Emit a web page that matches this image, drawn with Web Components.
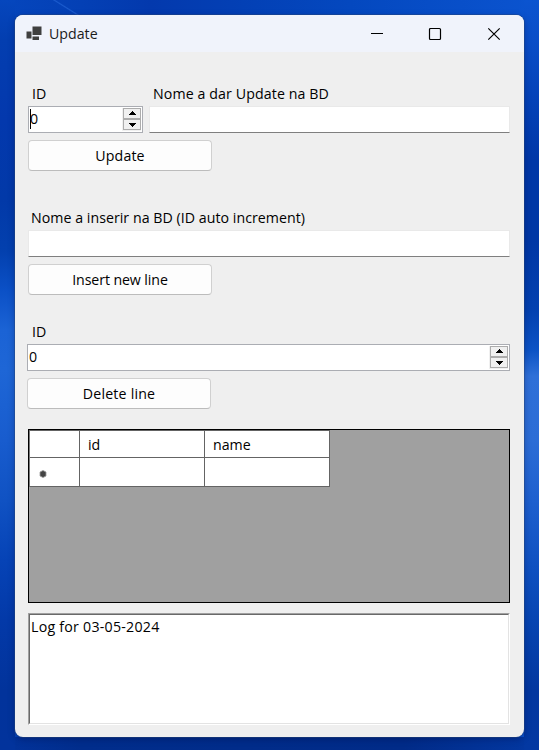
<!DOCTYPE html>
<html lang="pt">
<head>
<meta charset="utf-8">
<title>Update</title>
<style>
html,body{margin:0;height:100%;overflow:hidden}
body{font:14.2px/20px "Open Sans","Noto Sans",sans-serif;color:#000}
</style>
</head>
<body>
<desk-top>
  <app-window caption="Update">
    <form-row style="margin-top:32px">
      <form-field style="width:115px"><field-label slot="label" style="padding-left:4px">ID</field-label><spin-box value="0" caret></spin-box></form-field>
      <form-field style="flex:1"><field-label slot="label" style="padding-left:4px" fit="175">Nome a dar Update na BD</field-label><text-box></text-box></form-field>
    </form-row>
    <push-button style="margin-top:7px" fit="48.500">Update</push-button>
    <form-field style="margin-top:37px"><field-label slot="label" style="padding-left:3px" fit="273">Nome a inserir na BD (ID auto increment)</field-label><text-box></text-box></form-field>
    <push-button style="margin-top:7px" fit="94.500">Insert new line</push-button>
    <form-field style="margin:27px 0 0 -1px"><field-label slot="label" style="padding-left:5px">ID</field-label><spin-box value="0"></spin-box></form-field>
    <push-button style="margin:7px 0 0 -1px" fit="71.500">Delete line</push-button>
    <data-grid></data-grid>
    <log-box fit="127.500">Log for 03-05-2024</log-box>
  </app-window>
</desk-top>
<script>
const define = (name, html, setup) => customElements.define(name, class extends HTMLElement {
  connectedCallback() {
    if (this.shadowRoot) return;
    this.attachShadow({ mode: 'open' }).innerHTML = html;
    if (setup) setup(this, this.shadowRoot);
  }
});
// Tracks a text out or in so that it takes the width given in its fit attribute.
const fitText = (el, root) => {
  const want = parseFloat(el.getAttribute('fit'));
  const t = root.querySelector('.t');
  if (!want || !t) return;
  const n = el.textContent.trim().length;
  t.style.letterSpacing = ((want + 1 - t.getBoundingClientRect().width) / n) + 'px';
};

define('desk-top', `<style>
:host{display:block;box-sizing:border-box;width:539px;height:750px;padding:15px;overflow:hidden;
background:
linear-gradient(32deg,transparent 46%,rgba(60,130,240,.4) 50%,transparent 54%) 52px 0/28px 15px no-repeat,
linear-gradient(180deg,#0546bd 0,#033eb0 40px,#0338ad 120px,#0239a8 200px,#0340ae 250px,#0b50c6 290px,#1b63d5 330px,#1e66d6 370px,#185cce 440px,#1052c3 500px,#0643b6 560px,#0339a8 620px,#02339b 690px,#02339c 750px) 0 0/15px 750px no-repeat,
linear-gradient(180deg,#0b54d0 0,#0a4ec8 40px,#0442b8 100px,#0037a7 160px,#0037a5 240px,#0341b0 310px,#0c53c5 350px,#2f70d8 376px,#2c6dd6 440px,#1e60cf 500px,#0e50c0 570px,#0745b2 620px,#03379f 690px,#0338a2 750px) 524px 0/15px 750px no-repeat,
linear-gradient(90deg,#02339c,#012d8c 15%,#012b88 75%,#0338a2) 0 737px/539px 13px no-repeat,
linear-gradient(90deg,#0546bd,#0440b5 15%,#0339ad 28%,#0340b5 45%,#0448bf 65%,#0b54d0)}
</style><slot></slot>`);

define('app-window', `<style>
:host{display:flex;flex-direction:column;width:509px;height:722px;border-radius:8px;overflow:hidden;background:#efefef;box-shadow:0 0 0 1px rgba(40,70,120,.45),0 2px 7px rgba(0,10,60,.35)}
header{display:flex;align-items:center;height:37px;flex:none;background:#f0f3fb;box-sizing:border-box;padding-left:11px}
.t{margin-left:6px;flex:1;color:#1b1b1b}
header svg{display:block;flex:none}
.min{margin-right:44px}.max{margin-right:45px}.x{margin-right:23px}
main{display:flex;flex-direction:column;align-items:stretch;padding:0 14px 0 13px}
</style>
<header>
<svg width="17" height="16" viewBox="0 0 17 16"><path fill="#3f3f3f" d="M6.500 0.500h9v8.500h-9zM.500 5.500h5v7h-5zM6.500 10.500h6.500v3.500h-6.500z"/></svg>
<span class="t"></span>
<svg class="min" width="14" height="14"><path d="M1 6.500h12" stroke="#000"/></svg>
<svg class="max" width="14" height="14"><rect x="1.500" y="1.500" width="11" height="11" rx="1" fill="none" stroke="#000" stroke-width="1.200"/></svg>
<svg class="x" width="14" height="14"><path d="M1.300 1.300l11.400 11.400M12.700 1.300L1.300 12.700" stroke="#000" stroke-width="1.200"/></svg>
</header><main><slot></slot></main>`, (el, r) => {
  r.querySelector('.t').textContent = el.getAttribute('caption');
});

define('form-row', `<style>:host{display:flex;gap:6px}</style><slot></slot>`);
define('form-field', `<style>:host{display:flex;flex-direction:column}</style><slot name="label"></slot><slot></slot>`);
define('field-label', `<style>:host{display:block;height:22px;line-height:20px;white-space:nowrap}.t{display:inline-block}</style><span class="t"><slot></slot></span>`, fitText);
define('text-box', `<style>:host{display:block;box-sizing:border-box;height:27px;background:#fff;border:1px solid #e9e9e9;border-bottom-color:#7f7f7f}</style>`);

define('spin-box', `<style>
:host{display:flex;box-sizing:border-box;height:27px;background:#fff;border:1px solid #abadb3;padding:1px 1px 2px 1px}
.v{flex:1;line-height:21px;display:flex}
:host([caret]) .v::before{content:"";width:1px;height:20px;margin:1px -1px 0 0;background:#000}
.b{box-sizing:border-box;width:19px;height:23px;display:grid;grid-template-rows:11px 11px;background:#f0f0f0;padding:0 0 1px 1px}
.b div{border:1px solid #acacac;background:#f0f0f0;display:flex;justify-content:center;box-sizing:border-box;padding-top:2px}
.b div + div{padding-top:3px}
svg{display:block}
</style><span class="v"></span><div class="b"><div><svg width="7" height="4" shape-rendering="crispEdges"><path d="M3 0h1v1h1v1h1v1h1v1H0V3h1V2h1V1h1z"/></svg></div><div><svg width="7" height="4" shape-rendering="crispEdges"><path d="M0 0h7v1H6v1H5v1H4v1H3V3H2V2H1V1H0z"/></svg></div></div>`, (el, r) => {
  r.querySelector('.v').textContent = el.getAttribute('value');
});

define('push-button', `<style>
:host{display:flex;align-items:center;justify-content:center;box-sizing:border-box;width:184px;height:31px;background:#fdfdfd;border:1px solid #d0d0d0;border-bottom-color:#bcbcbc;border-radius:4px;white-space:nowrap}
</style><span class="t"><slot></slot></span>`, fitText);

define('data-grid', `<style>
:host{display:block;box-sizing:border-box;height:174px;margin-top:20px;background:#a0a0a0;border:1px solid #000}
.g{display:grid;grid-template-columns:49px 124px 124px;grid-template-rows:26px 28px;gap:1px;width:299px;background:#646464;border:1px solid #646464;border-left:1px solid #777;box-sizing:content-box}
.g div{background:#fff;line-height:28px;height:100%;box-sizing:border-box;padding-left:8px;overflow:hidden}
svg{display:block;margin:12px 0 0 1px}
</style><div class="g"><div></div><div>id</div><div>name</div><div><svg width="8" height="8"><path d="M4 .5L7 2v4L4 7.500 1 6V2z" fill="#444" stroke="#999" stroke-width=".8"/></svg></div><div></div><div></div></div>`);

define('log-box', `<style>
:host{display:block;box-sizing:border-box;height:112px;margin-top:10px;background:#fff;border:1px solid;border-color:#a0a0a0 #fff #fff #a0a0a0}
.i{box-sizing:border-box;height:110px;border:1px solid;border-color:#696969 #e3e3e3 #e3e3e3 #696969;padding:1px 0 0 1px}
.t{display:inline-block;line-height:22px}
</style><div class="i"><span class="t"><slot></slot></span></div>`, fitText);
</script>
</body>
</html>
